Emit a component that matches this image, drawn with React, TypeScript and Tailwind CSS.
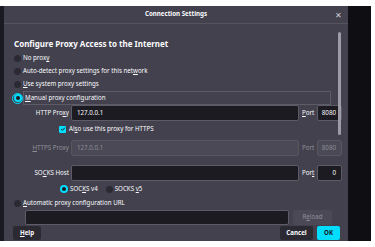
import React from "react";

const font = { fontFamily: '"Noto Sans", "Open Sans", sans-serif' };

const U = ({ children }: { children: React.ReactNode }) => <span className="underline underline-offset-[1px]">{children}</span>;

const Radio = ({ checked }: { checked?: boolean }) =>
  checked ? (
    <span className="flex h-[8px] w-[8px] items-center justify-center rounded-full bg-[#00ddff]">
      <span className="h-[4px] w-[4px] rounded-full bg-[#1c1b22]" />
    </span>
  ) : (
    <span className="h-[7px] w-[7px] rounded-full bg-[#2b2a33]" />
  );

const Field = ({ value, disabled, right }: { value: string; disabled?: boolean; right?: boolean }) => (
  <div
    className={`flex h-full items-center rounded-[2px] border px-[5px] ${right ? "justify-end" : ""} ${
      disabled ? "border-[#57565f] bg-[#4a4955] text-[#8f8e98]" : "border-[#5c5b66] bg-[#1c1b22] text-[#fbfbfe]"
    }`}
  >
    {value}
  </div>
);

const ProxyRow = ({ label, value, port, disabled, portLabel }: { label: React.ReactNode; value: string; port: string; disabled?: boolean; portLabel: React.ReactNode }) => (
  <div className={`flex h-[16px] items-center ${disabled ? "text-[#8f8e98]" : ""}`}>
    <div className="w-[57px] pr-[2px] text-right">{label}</div>
    <div className="h-full w-[228px]">
      <Field value={value} disabled={disabled} />
    </div>
    <div className="w-[18px] pl-[3px]">{portLabel}</div>
    <div className="h-full w-[25px]">
      <Field value={port} disabled={disabled} right />
    </div>
  </div>
);

const Option = ({ children, h = "h-[13px]" }: { children: React.ReactNode; h?: string }) => (
  <div className={`flex ${h} items-center gap-[2px]`}>
    <Radio />
    <span>{children}</span>
  </div>
);

export default function App() {
  return (
    <div className="flex h-[247px] w-[375px] flex-col bg-white text-[6.2px] leading-none text-[#fbfbfe]" style={font}>
      <div className="h-[6px]" />
      <div className="flex h-[235px]">
        <div className="w-[4px] bg-[#1a1a22]" />
        <div className="flex w-[344px] flex-col bg-[#42414d]">
          <div className="relative flex h-[18px] shrink-0 items-center justify-center border-b border-[#55545f] font-bold">
            Connection Settings
            <span className="absolute right-[6px] top-[5px] text-[8px] font-normal text-[#cfcfd8]">✕</span>
          </div>
          <div className="relative flex flex-1 flex-col pl-[10px]">
            <div className="absolute left-[334px] top-[8px] h-[103px] w-[3px] rounded-full bg-[#9d9ca8]" />
            <div className="mb-[2px] mt-[14px] flex h-[12px] items-center text-[8px] font-bold">Configure Proxy Access to the Internet</div>
            <Option>
              No prox<U>y</U>
            </Option>
            <Option>
              Auto-detect proxy settings for this net<U>w</U>ork
            </Option>
            <Option>
              <U>U</U>se system proxy settings
            </Option>
            <div className="flex h-[14px] items-center">
              <span className="-ml-[2px] flex h-[11px] w-[11px] shrink-0 items-center justify-center rounded-full border border-[#00ddff]">
                <Radio checked />
              </span>
              <div className="flex h-full w-[308px] items-center border border-[#5c5b66] pl-[1px]">
                <span>
                  <U>M</U>anual proxy configuration
                </span>
              </div>
            </div>
            <ProxyRow label={<>HTTP Pro<U>x</U>y</>} value="127.0.0.1" port="8080" portLabel={<><U>P</U>ort</>} />
            <div className="flex h-[16px] items-center gap-[3px] pl-[45px]">
              <span className="flex h-[7px] w-[7px] items-center justify-center rounded-[1px] bg-[#00ddff]">
                <svg viewBox="0 0 8 8" className="h-[6px] w-[6px]">
                  <path d="M1.5 4.2 L3.2 5.8 L6.5 2.2" fill="none" stroke="#1c1b22" strokeWidth="1.3" />
                </svg>
              </span>
              <span>
                Al<U>s</U>o use this proxy for HTTPS
              </span>
            </div>
            <div className="mt-[3px]">
              <ProxyRow label={<><U>H</U>TTPS Proxy</>} value="127.0.0.1" port="8080" disabled portLabel="Port" />
            </div>
            <div className="mt-[9px]">
              <ProxyRow label={<>SO<U>C</U>KS Host</>} value="" port="0" portLabel={<>Por<U>t</U></>} />
            </div>
            <div className="mt-[1px] flex h-[14px] items-center gap-[2px] pl-[46px]">
              <Radio checked />
              <span>
                SOC<U>K</U>S v4
              </span>
              <span className="ml-[4px]" />
              <Radio />
              <span>
                SOCKS <U>v</U>5
              </span>
            </div>
            <Option h="h-[14px]">
              <U>A</U>utomatic proxy configuration URL
            </Option>
            <div className="flex h-[15px] items-stretch">
              <div className="ml-[11px] w-[264px]">
                <Field value="" />
              </div>
              <div className="ml-[4px] flex w-[39px] items-center justify-center rounded-[2px] bg-[#4a4955] text-[#8f8e98]">
                <span>
                  R<U>e</U>load
                </span>
              </div>
            </div>
            <div className="mt-[1px] flex h-[14px] items-stretch font-bold">
              <div className="-ml-[1px] flex w-[28px] items-center justify-center rounded-[2px] bg-[#2b2a33]">
                <span>
                  <U>H</U>elp
                </span>
              </div>
              <div className="ml-auto flex w-[33px] items-center justify-center rounded-[2px] bg-[#2b2a33]">Cancel</div>
              <div className="ml-[4px] mr-[8px] flex w-[23px] items-center justify-center rounded-[2px] bg-[#00ddff] text-[#15141a]">OK</div>
            </div>
          </div>
        </div>
        <div className="w-[23px] bg-[#0f0e13]" />
        <div className="w-[4px] bg-white" />
      </div>
      <div className="h-[6px]" />
    </div>
  );
}
